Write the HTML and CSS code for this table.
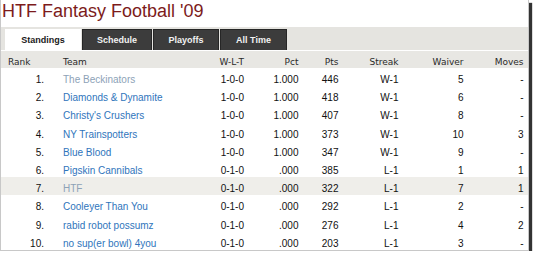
FILE: index.html
```html
<!DOCTYPE html>
<html>
<head>
<meta charset="utf-8">
<title>HTF Fantasy Football '09</title>
<link rel="stylesheet" href="styles.css">
</head>
<body>
<div class="frame">
  <h1 class="title">HTF Fantasy Football '09</h1>
  <div class="tabs">
    <span class="tab tab-active tab-standings">Standings</span>
    <span class="tab tab-schedule">Schedule</span>
    <span class="tab tab-playoffs">Playoffs</span>
    <span class="tab tab-alltime">All Time</span>
  </div>
  <table class="standings">
    <colgroup>
      <col class="w-rank"><col class="w-team"><col class="w-wlt"><col class="w-pct"><col class="w-pts"><col class="w-streak"><col class="w-waiver"><col class="w-moves"><col class="w-pad">
    </colgroup>
    <thead>
      <tr>
        <th class="h-rank">Rank</th>
        <th class="h-team">Team</th>
        <th class="num">W-L-T</th>
        <th class="num">Pct</th>
        <th class="num">Pts</th>
        <th class="num">Streak</th>
        <th class="num">Waiver</th>
        <th class="num">Moves</th>
        <th></th>
      </tr>
    </thead>
    <tbody>
      <tr><td class="num">1.</td><td class="team"><a class="own">The Beckinators</a></td><td class="num">1-0-0</td><td class="num">1.000</td><td class="num">446</td><td class="num">W-1</td><td class="num">5</td><td class="num">-</td><td></td></tr>
      <tr><td class="num">2.</td><td class="team"><a>Diamonds &amp; Dynamite</a></td><td class="num">1-0-0</td><td class="num">1.000</td><td class="num">418</td><td class="num">W-1</td><td class="num">6</td><td class="num">-</td><td></td></tr>
      <tr><td class="num">3.</td><td class="team"><a>Christy's Crushers</a></td><td class="num">1-0-0</td><td class="num">1.000</td><td class="num">407</td><td class="num">W-1</td><td class="num">8</td><td class="num">-</td><td></td></tr>
      <tr><td class="num">4.</td><td class="team"><a>NY Trainspotters</a></td><td class="num">1-0-0</td><td class="num">1.000</td><td class="num">373</td><td class="num">W-1</td><td class="num">10</td><td class="num">3</td><td></td></tr>
      <tr><td class="num">5.</td><td class="team"><a>Blue Blood</a></td><td class="num">1-0-0</td><td class="num">1.000</td><td class="num">347</td><td class="num">W-1</td><td class="num">9</td><td class="num">-</td><td></td></tr>
      <tr><td class="num">6.</td><td class="team"><a>Pigskin Cannibals</a></td><td class="num">0-1-0</td><td class="num">.000</td><td class="num">385</td><td class="num">L-1</td><td class="num">1</td><td class="num">1</td><td></td></tr>
      <tr class="mine"><td class="num">7.</td><td class="team"><a class="own">HTF</a></td><td class="num">0-1-0</td><td class="num">.000</td><td class="num">322</td><td class="num">L-1</td><td class="num">7</td><td class="num">1</td><td></td></tr>
      <tr><td class="num">8.</td><td class="team"><a>Cooleyer Than You</a></td><td class="num">0-1-0</td><td class="num">.000</td><td class="num">292</td><td class="num">L-1</td><td class="num">2</td><td class="num">-</td><td></td></tr>
      <tr><td class="num">9.</td><td class="team"><a>rabid robot possumz</a></td><td class="num">0-1-0</td><td class="num">.000</td><td class="num">276</td><td class="num">L-1</td><td class="num">4</td><td class="num">2</td><td></td></tr>
      <tr><td class="num">10.</td><td class="team"><a>no sup(er bowl) 4you</a></td><td class="num">0-1-0</td><td class="num">.000</td><td class="num">203</td><td class="num">L-1</td><td class="num">3</td><td class="num">-</td><td></td></tr>
    </tbody>
  </table>
</div>
</body>
</html>
```

FILE: styles.css
```css
html, body {
  margin: 0;
  padding: 0;
  background: #fff;
}

.frame {
  width: 527px;
  background: #fff;
  border-left: 1px solid #c8c8c8;
  border-right: 1px solid #c8c8c8;
  border-bottom: 1px solid #c8c8c8;
  box-shadow: 3px 3px 1px #333;
}

.title {
  margin: 0;
  height: 26px;
  padding: 1px 0 0 1px;
  font-family: "Liberation Sans", Arial, sans-serif;
  font-size: 18px;
  font-weight: normal;
  line-height: 21px;
  color: #7c1b1b;
}

.tabs {
  display: flex;
  gap: 1px;
  height: 21px;
  padding: 2px 0 0 4px;
  background: #e5e4e0;
  border-bottom: 1px solid #fff;
}

.tab {
  display: flex;
  align-items: center;
  justify-content: center;
  box-sizing: border-box;
  height: 21px;
  font-family: "Liberation Sans", Arial, sans-serif;
  font-size: 9px;
  font-weight: bold;
  color: #f2f2f2;
  background: #3c3c3c;
  border: 1px solid #262626;
  border-bottom: 0;
}

.tab-active {
  background: #fff;
  color: #1a1a1a;
  border-color: #fff;
}

.tab-standings { width: 76px; }
.tab-schedule { width: 70px; }
.tab-playoffs { width: 66px; }
.tab-alltime { width: 67px; }

.standings {
  width: 527px;
  table-layout: fixed;
  border-collapse: collapse;
  border-spacing: 0;
}

.w-rank { width: 43px; }
.w-team { width: 160px; }
.w-wlt { width: 40px; }
.w-pct { width: 54.5px; }
.w-pts { width: 40px; }
.w-streak { width: 60px; }
.w-waiver { width: 65px; }
.w-moves { width: 60px; }
.w-pad { width: 4.5px; }

.standings th {
  height: 12px;
  padding: 5px 0 0 0;
  background: #e8e7e3;
  font-family: "DejaVu Sans", Verdana, sans-serif;
  font-size: 9px;
  font-weight: normal;
  line-height: 12px;
  color: #2a2a2a;
  white-space: nowrap;
  text-align: left;
}

.standings th.num { text-align: right; }
.standings th.h-rank { padding-left: 7px; }
.standings th.h-team { padding-left: 19px; }

.standings td {
  height: 13.2px;
  padding: 5px 0 0 0;
  font-family: "Liberation Sans", Arial, sans-serif;
  font-size: 10px;
  line-height: 13.2px;
  color: #111;
  white-space: nowrap;
}

.standings td.num { text-align: right; }
.standings td.team { padding-left: 19px; }

.standings a {
  color: #2f75bc;
  text-decoration: none;
}

.standings a.own {
  color: #8da2b7;
}

.standings tr.mine td {
  background: #efeeea;
}
```
